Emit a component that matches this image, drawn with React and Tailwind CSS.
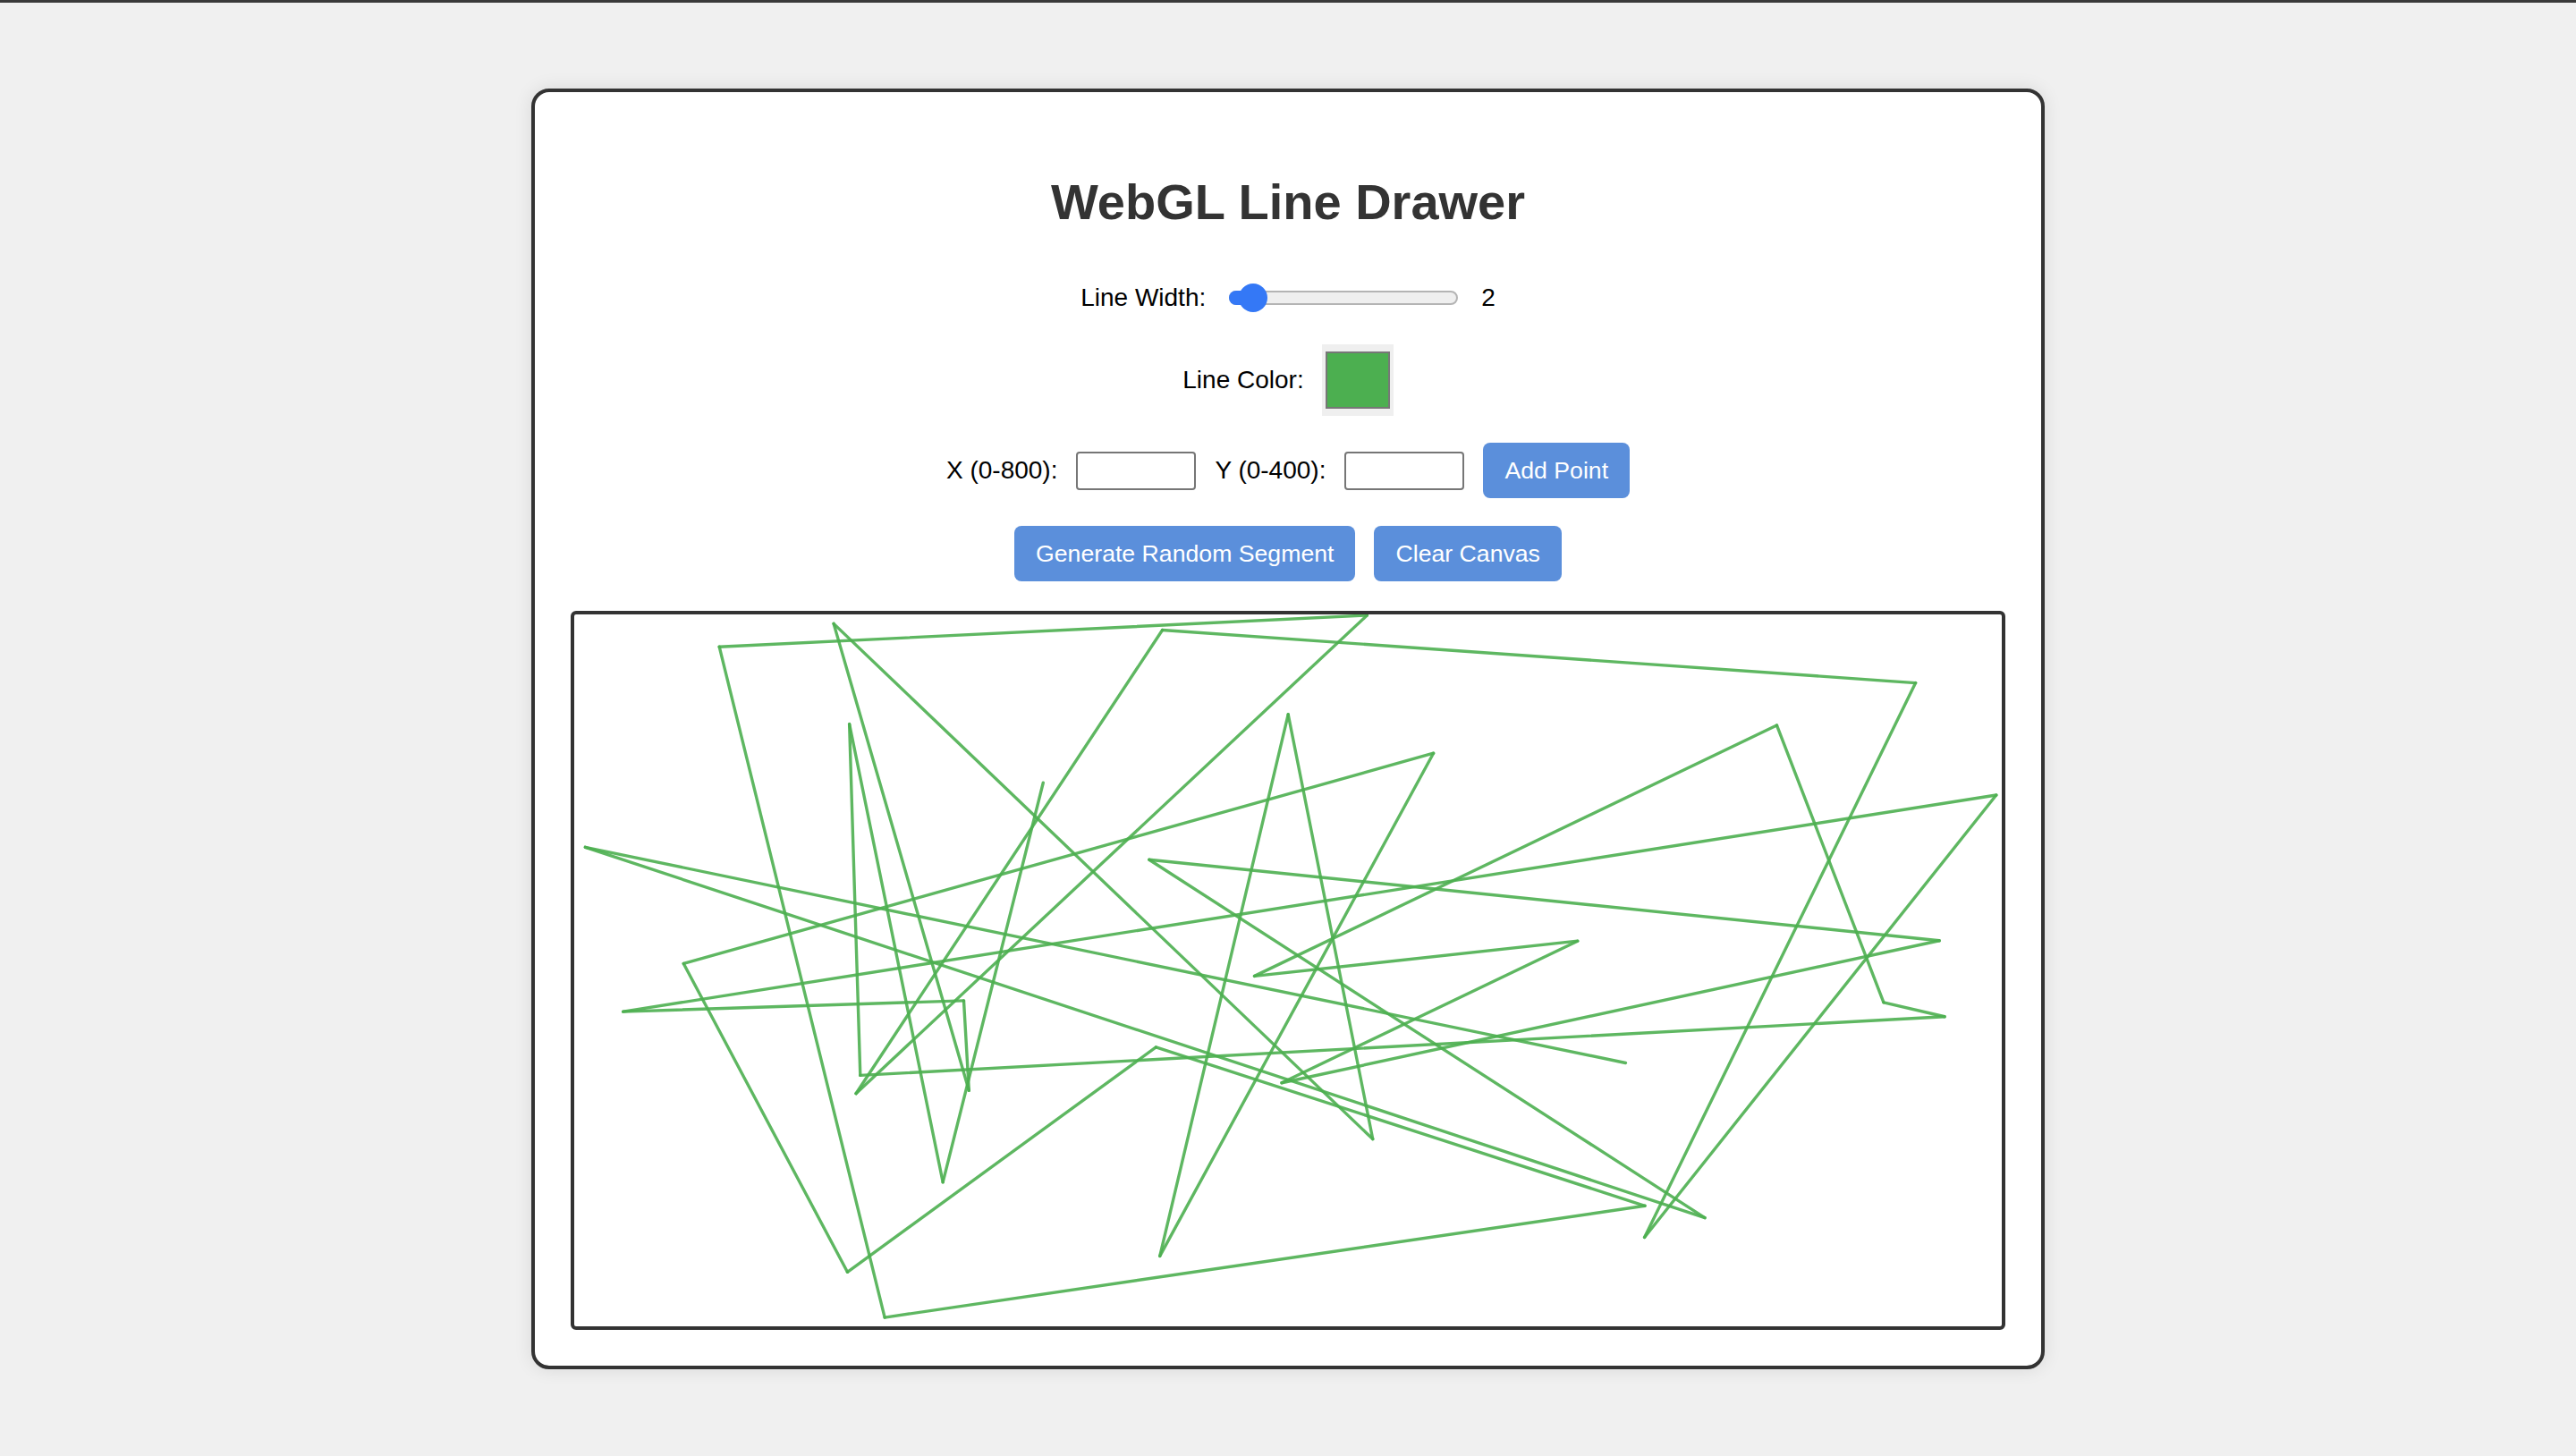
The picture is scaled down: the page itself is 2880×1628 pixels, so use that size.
import React from 'react';

// canvas points, in the 800x400 drawing-buffer space
const PTS = {
  A: [81.3, 18.2], B: [145.4, 5.2], C: [329.6, 8.8], D: [154.2, 61.6],
  E: [262.8, 94.6], F: [400.1, 56.2], G: [6.2, 130.8], H: [322.2, 137.8],
  I: [61.3, 196.2], J: [27.4, 223.2], K: [218.3, 217], L: [381.2, 203.2],
  M: [444.3, 0.5], N: [751.7, 38.5], O: [673.9, 62.3], P: [481.5, 78],
  Q: [796.9, 101.5], R: [765, 183.3], S: [562.3, 183.5], T: [733.8, 218],
  U: [768, 226], V1: [160.3, 259], V2: [157.9, 269.2], V3: [221.2, 267.5],
  V4: [206.6, 319], V5: [326, 243.2], V6: [153.1, 369.5], V7: [174, 395],
  V8: [328.2, 360.5], W1: [589.2, 252], W2: [447.5, 294.8], W3: [600, 332.3],
  W4: [633.6, 339], W5: [599.8, 350], X: [396.5, 263.2],
};

const STRIPS = [
  'W1 G W4 H R X S L O T U V1 D V4 E',
  'A M V2 C N W5 Q J K V3 B W2 F V8 P I V6 V5 W3 V7 A',
];

const segments = STRIPS.flatMap((strip) => {
  const names = strip.split(' ');
  return names.slice(1).map((name, i) => [PTS[names[i]], PTS[name]]);
});

const Slider = () => (
  <div className="relative h-[32px] w-[256px]">
    <div className="absolute left-0 right-0 top-[8px] h-[16px] rounded-full border-2 border-[#b4b4b4] bg-[#efefef]" />
    <div className="absolute left-0 top-[8px] h-[16px] w-[28px] rounded-l-full bg-[#3478f6]" />
    <div className="absolute left-[11px] top-0 h-[32px] w-[32px] rounded-full bg-[#3478f6]" />
  </div>
);

const Button = ({ children }) => (
  <button
    type="button"
    className="h-[62px] rounded-[8px] bg-[#5b8fdb] px-[24px] text-[26.67px] leading-[30px] text-white"
  >
    {children}
  </button>
);

export default function App() {
  return (
    <div className="min-h-screen bg-[#f0f0f0] font-['Liberation_Sans',Arial,sans-serif] text-black">
      <div className="h-[3px] bg-[#3a3a3a]" />

      <div className="mx-auto mt-[96px] w-[1692px] rounded-[20px] border-4 border-[#333] bg-white p-[40px] shadow-[0_0_20px_rgba(0,0,0,0.1)]">
        <h1 className="mt-[51px] text-center text-[56px] font-bold leading-[64px] text-[#333]">
          WebGL Line Drawer
        </h1>

        {/* Line width */}
        <div className="mt-[53px] flex h-[44px] items-center justify-center gap-[26px] text-[28px]">
          <span>Line Width:</span>
          <Slider />
          <span>2</span>
        </div>

        {/* Line color */}
        <div className="mt-[30px] flex h-[80px] items-center justify-center gap-[20px] text-[28px]">
          <span>Line Color:</span>
          <div className="flex h-[80px] w-[80px] items-center justify-center bg-[#efefef]">
            <div className="h-[64px] w-[72px] border-2 border-[#777] bg-[#4caf50]" />
          </div>
        </div>

        {/* Point input */}
        <div className="mt-[30px] flex h-[62px] items-center justify-center gap-[21px] text-[28px]">
          <span>X (0-800):</span>
          <input
            type="number"
            className="h-[43px] w-[134px] rounded-[4px] border-2 border-[#767676] bg-white"
          />
          <span>Y (0-400):</span>
          <input
            type="number"
            className="h-[43px] w-[134px] rounded-[4px] border-2 border-[#767676] bg-white"
          />
          <Button>Add Point</Button>
        </div>

        {/* Actions */}
        <div className="mt-[31px] flex justify-center gap-[21px]">
          <Button>Generate Random Segment</Button>
          <Button>Clear Canvas</Button>
        </div>

        {/* Canvas */}
        <div className="mt-[33px] h-[804px] w-[1604px] rounded-[6px] border-4 border-[#333] bg-white">
          <svg viewBox="0 0 800 400" preserveAspectRatio="none" className="block h-full w-full">
            {segments.map(([a, b], i) => (
              <line
                key={i}
                x1={a[0]}
                y1={a[1]}
                x2={b[0]}
                y2={b[1]}
                stroke="#4caf50"
                strokeOpacity="0.9"
                strokeWidth="1.7"
                strokeLinecap="round"
              />
            ))}
          </svg>
        </div>
      </div>
    </div>
  );
}
